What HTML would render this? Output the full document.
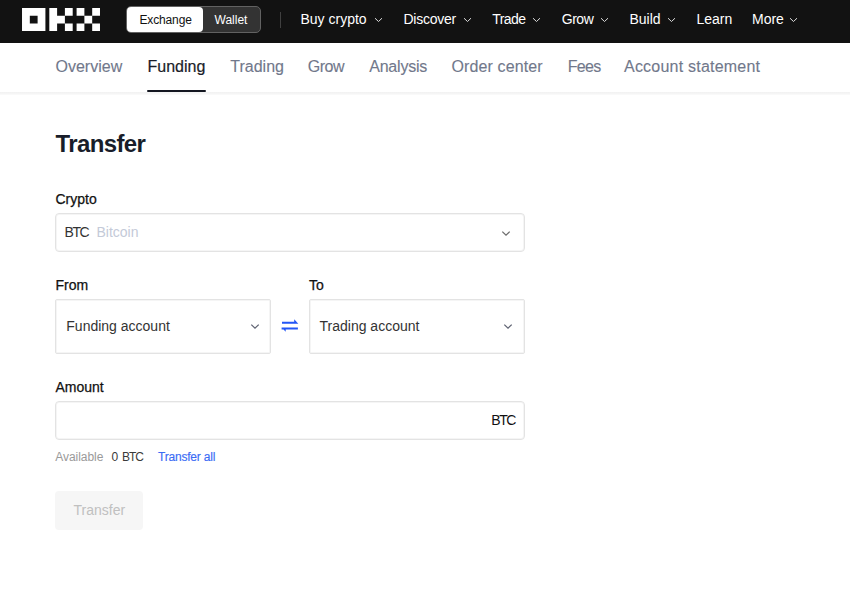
<!DOCTYPE html>
<html><head><meta charset="utf-8">
<style>
*{box-sizing:border-box;margin:0;padding:0}
html,body{width:850px;height:592px;overflow:hidden;background:#fff;font-family:"Liberation Sans",sans-serif}
.a{position:absolute;white-space:nowrap}
#hdr{position:absolute;left:0;top:0;width:850px;height:43px;background:#121212}
.nav{font-size:14px;line-height:14px;color:#fff;top:12px}
.chev{position:absolute}
.sub{font-size:16px;line-height:16px;color:#71788b;top:58.5px;-webkit-text-stroke:0.12px #71788b}
.lbl{font-size:14px;line-height:14px;color:#111;-webkit-text-stroke:0.25px #111}
.box{position:absolute;border:1px solid #e3e3e3;background:#fff;box-shadow:inset 0 0 0 1px #f5f5f5}
.val{font-size:14px;line-height:14px;color:#333}
</style></head>
<body>
<div id="hdr">
  <svg class="a" style="left:21.5px;top:7.8px" width="78" height="23.4" viewBox="0 0 20 6">
    <path fill="#fff" d="M0 0h6v6h-6zM2 2v2h2v-2z" fill-rule="evenodd"/>
    <path fill="#fff" d="M7 0h2v6h-2zM9 2h2v2h-2zM11 0h2v2h-2zM11 4h2v2h-2z"/>
    <path fill="#fff" d="M14 0h2v2h-2zM18 0h2v2h-2zM16 2h2v2h-2zM14 4h2v2h-2zM18 4h2v2h-2z"/>
  </svg>
  <div class="a" style="left:126px;top:6px;width:134.5px;height:27px;border:1px solid #626262;border-radius:5px;background:#333"></div>
  <div class="a" style="left:127px;top:7px;width:76px;height:25px;border-radius:4px;background:#fff"></div>
  <div class="a" style="left:139.5px;top:14px;font-size:12px;line-height:12px;color:#111;letter-spacing:-0.15px">Exchange</div>
  <div class="a" style="left:214.5px;top:14px;font-size:12px;line-height:12px;color:#fff">Wallet</div>
  <div class="a" style="left:280px;top:11.5px;width:1px;height:16px;background:#404040"></div>

  <div class="a nav" style="left:300.5px">Buy crypto</div>
  <div class="a nav" style="left:403.5px;letter-spacing:-0.25px">Discover</div>
  <div class="a nav" style="left:492.3px;letter-spacing:-0.6px">Trade</div>
  <div class="a nav" style="left:561.8px;letter-spacing:-0.5px">Grow</div>
  <div class="a nav" style="left:629.5px">Build</div>
  <div class="a nav" style="left:696.5px">Learn</div>
  <div class="a nav" style="left:752px">More</div>
  <svg class="chev" style="left:374px;top:17px" width="9" height="6" viewBox="0 0 9 6"><path d="M1 1.2l3.5 3.3 3.5-3.3" fill="none" stroke="#ddd" stroke-width="1"/></svg>
  <svg class="chev" style="left:463px;top:17px" width="9" height="6" viewBox="0 0 9 6"><path d="M1 1.2l3.5 3.3 3.5-3.3" fill="none" stroke="#ddd" stroke-width="1"/></svg>
  <svg class="chev" style="left:531.8px;top:17px" width="9" height="6" viewBox="0 0 9 6"><path d="M1 1.2l3.5 3.3 3.5-3.3" fill="none" stroke="#ddd" stroke-width="1"/></svg>
  <svg class="chev" style="left:600px;top:17px" width="9" height="6" viewBox="0 0 9 6"><path d="M1 1.2l3.5 3.3 3.5-3.3" fill="none" stroke="#ddd" stroke-width="1"/></svg>
  <svg class="chev" style="left:666.5px;top:17px" width="9" height="6" viewBox="0 0 9 6"><path d="M1 1.2l3.5 3.3 3.5-3.3" fill="none" stroke="#ddd" stroke-width="1"/></svg>
  <svg class="chev" style="left:789px;top:17px" width="9" height="6" viewBox="0 0 9 6"><path d="M1 1.2l3.5 3.3 3.5-3.3" fill="none" stroke="#ddd" stroke-width="1"/></svg>
</div>

<!-- sub nav -->
<div class="a sub" style="left:55.5px">Overview</div>
<div class="a sub" style="left:147.5px;color:#1a1d29;-webkit-text-stroke:0.2px #1a1d29">Funding</div>
<div class="a sub" style="left:230.3px">Trading</div>
<div class="a sub" style="left:307.8px;letter-spacing:-0.5px">Grow</div>
<div class="a sub" style="left:369.2px;letter-spacing:-0.2px">Analysis</div>
<div class="a sub" style="left:451.5px;letter-spacing:0.12px">Order center</div>
<div class="a sub" style="left:567.8px;letter-spacing:-0.7px">Fees</div>
<div class="a sub" style="left:624px;letter-spacing:0.22px">Account statement</div>
<div class="a" style="left:0;top:92px;width:850px;height:3px;background:linear-gradient(#f1f1f1,#f5f5f5 50%,#fbfbfb)"></div>
<div class="a" style="left:146.8px;top:90px;width:59.7px;height:2px;border-radius:1px;background:#131620"></div>

<!-- title -->
<div class="a" style="left:55.6px;top:132.3px;font-size:24px;line-height:24px;font-weight:700;color:#181d2a;letter-spacing:-0.65px">Transfer</div>

<div class="a lbl" style="left:55.5px;top:191.6px">Crypto</div>
<div class="box" style="left:55px;top:213px;width:470px;height:39px;border-radius:4px"></div>
<div class="a val" style="left:64.6px;top:225.4px;letter-spacing:-1.45px">BTC</div>
<div class="a val" style="left:96.5px;top:225.4px;color:#c4cad8">Bitcoin</div>
<svg class="chev" style="left:501px;top:229.5px" width="10" height="7" viewBox="0 0 10 7"><path d="M1.3 1.6l3.7 3.6 3.7-3.6" fill="none" stroke="#6b6b6b" stroke-width="1.25"/></svg>

<div class="a lbl" style="left:55.5px;top:278.3px">From</div>
<div class="a lbl" style="left:309px;top:278.3px">To</div>
<div class="box" style="left:55px;top:299px;width:216px;height:55px;border-radius:2px"></div>
<div class="box" style="left:309px;top:299px;width:216px;height:55px;border-radius:2px"></div>
<div class="a val" style="left:66.3px;top:319.4px">Funding account</div>
<div class="a val" style="left:319.5px;top:319.4px">Trading account</div>
<svg class="chev" style="left:250px;top:323px" width="10" height="7" viewBox="0 0 10 7"><path d="M1.3 1.6l3.7 3.6 3.7-3.6" fill="none" stroke="#5f6372" stroke-width="1.25"/></svg>
<svg class="chev" style="left:503px;top:323px" width="10" height="7" viewBox="0 0 10 7"><path d="M1.3 1.6l3.7 3.6 3.7-3.6" fill="none" stroke="#5f6372" stroke-width="1.25"/></svg>
<svg class="a" style="left:278px;top:314px" width="24" height="24" viewBox="0 0 24 24">
  <path fill="#2356f6" d="M4 7.7h14.3v2h-14.3z M16.2 5.3l4.1 4.4h-4.1z M3.6 13.4h16.3v2h-16.3z M3.6 13.4h4.1v4.4z"/>
</svg>

<div class="a lbl" style="left:55.5px;top:380px">Amount</div>
<div class="box" style="left:55px;top:401px;width:470px;height:39px;border-radius:4px"></div>
<div class="a val" style="left:491.2px;top:413.3px;color:#111;letter-spacing:-1.4px">BTC</div>

<div class="a" style="left:55.3px;top:451px;font-size:12px;line-height:12px;color:#9a9a9a;letter-spacing:-0.05px">Available</div>
<div class="a" style="left:111.4px;top:451px;font-size:12px;line-height:12px;color:#3a3a3a">0</div>
<div class="a" style="left:121.9px;top:451px;font-size:12px;line-height:12px;color:#3a3a3a;letter-spacing:-0.95px">BTC</div>
<div class="a" style="left:158px;top:451px;font-size:12px;line-height:12px;color:#3b6cf5;letter-spacing:-0.2px;-webkit-text-stroke:0.15px #3b6cf5">Transfer all</div>

<div class="a" style="left:55px;top:491px;width:88px;height:39px;border-radius:4px;background:#f6f6f6"></div>
<div class="a" style="left:73.5px;top:503px;font-size:14px;line-height:14px;color:#c0c0c0">Transfer</div>
</body></html>
